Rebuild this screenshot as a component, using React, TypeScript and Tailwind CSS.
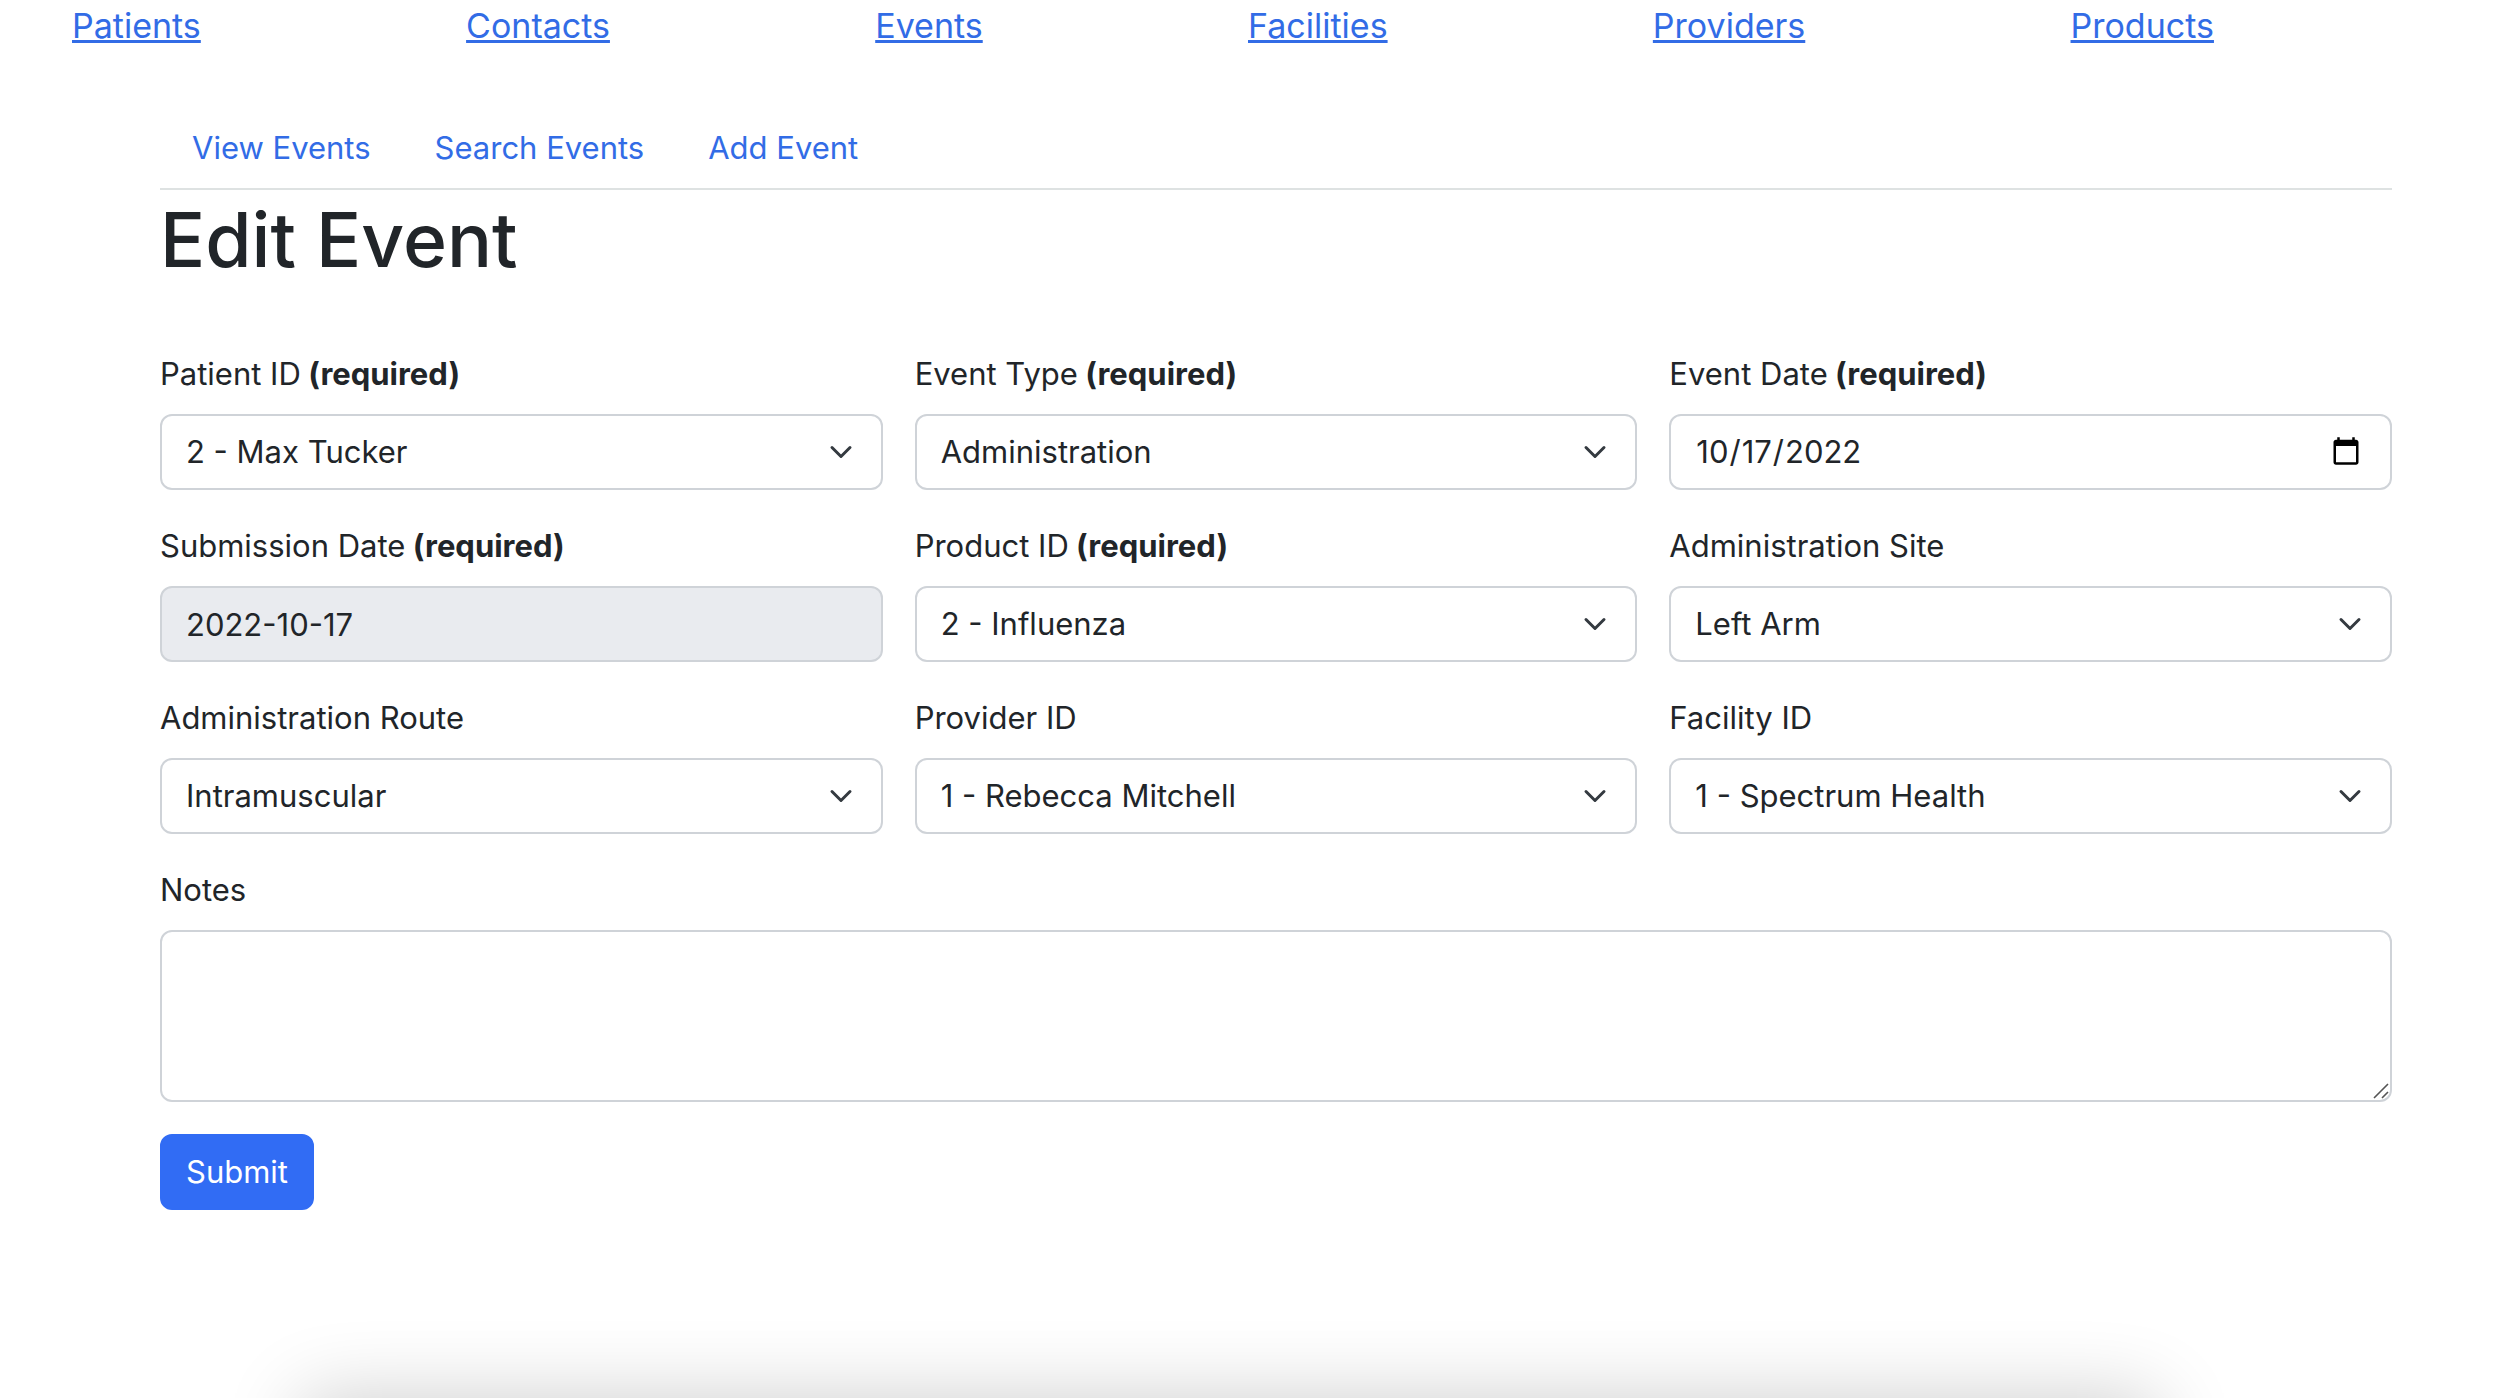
import { useState, type ReactNode } from "react";

const navLinks = ["Patients", "Contacts", "Events", "Facilities", "Providers", "Products"];
const tabs = ["View Events", "Search Events", "Add Event"];

const control =
  "block w-full rounded-xl border-2 border-[#cfd3d8] bg-white px-6 py-3 text-[31px] leading-12 text-[#212529]";

type FieldProps = { id: string; label: string; required?: boolean; children: ReactNode };

function Field({ id, label, required, children }: FieldProps) {
  return (
    <div>
      <label htmlFor={id} className="mb-4 block text-[31px] leading-12">
        {label}
        {required && <strong className="font-bold"> (required)</strong>}
      </label>
      {children}
    </div>
  );
}

type SelectFieldProps = { id: string; label: string; required?: boolean; option: string };

function SelectField({ id, label, required, option }: SelectFieldProps) {
  return (
    <Field id={id} label={label} required={required}>
      <div className="relative">
        <select id={id} className={`${control} h-19 appearance-none pr-18`}>
          <option>{option}</option>
        </select>
        <svg
          viewBox="0 0 16 16"
          className="pointer-events-none absolute top-1/2 right-[26px] h-6 w-8 -translate-y-1/2"
          fill="none"
          stroke="#343a40"
          strokeWidth="2"
          strokeLinecap="round"
          strokeLinejoin="round"
          aria-hidden="true"
        >
          <path d="m2 5 6 6 6-6" />
        </svg>
      </div>
    </Field>
  );
}

export default function App() {
  const [eventDate, setEventDate] = useState("2022-10-17");

  return (
    <div className="relative min-h-screen overflow-hidden bg-white font-['Inter','Liberation_Sans',sans-serif] text-[#212529]">
      <nav className="flex justify-between pr-[306px] pl-[72px]">
        {navLinks.map((link) => (
          <a
            key={link}
            href="#"
            className="text-[34px] leading-[52px] text-[#326ce6] underline decoration-3 underline-offset-2"
          >
            {link}
          </a>
        ))}
      </nav>

      <main className="mt-14 pr-32 pl-40">
        <nav className="flex border-b-2 border-[#dee2e2]">
          {tabs.map((tab) => (
            <a key={tab} href="#" className="px-8 py-4 text-[31px] leading-12 text-[#326ce6]">
              {tab}
            </a>
          ))}
        </nav>

        <h1 className="mb-15 text-[75px] leading-25 font-medium">Edit Event</h1>

        <form onSubmit={(e) => e.preventDefault()}>
          <div className="grid grid-cols-3 gap-8">
            <SelectField id="patient" label="Patient ID" required option="2 - Max Tucker" />
            <SelectField id="type" label="Event Type" required option="Administration" />
            <Field id="date" label="Event Date" required>
              <input
                id="date"
                type="date"
                value={eventDate}
                onChange={(e) => setEventDate(e.target.value)}
                className={`${control} h-19 pr-7 [&::-webkit-calendar-picker-indicator]:size-8 [&::-webkit-calendar-picker-indicator]:p-0`}
              />
            </Field>
            <Field id="submission" label="Submission Date" required>
              <input
                id="submission"
                type="text"
                readOnly
                value="2022-10-17"
                className="block h-19 w-full rounded-xl border-2 border-[#cfd3d8] bg-[#e9ebef] px-6 py-3 text-[31px] leading-12 text-[#212529]"
              />
            </Field>
            <SelectField id="product" label="Product ID" required option="2 - Influenza" />
            <SelectField id="site" label="Administration Site" option="Left Arm" />
            <SelectField id="route" label="Administration Route" option="Intramuscular" />
            <SelectField id="provider" label="Provider ID" option="1 - Rebecca Mitchell" />
            <SelectField id="facility" label="Facility ID" option="1 - Spectrum Health" />
            <div className="col-span-3">
              <Field id="notes" label="Notes">
                <div className="relative">
                  <textarea
                    id="notes"
                    className={`${control} h-43 resize-y [&::-webkit-resizer]:bg-transparent`}
                  />
                  <svg
                    viewBox="0 0 16 16"
                    className="pointer-events-none absolute right-[3px] bottom-[3px] size-4"
                    stroke="#555"
                    strokeWidth="1.6"
                    aria-hidden="true"
                  >
                    <path d="M1 15 15 1M9 15l6-6" />
                  </svg>
                </div>
              </Field>
            </div>
          </div>
          <button
            type="submit"
            className="mt-8 rounded-xl border-2 border-[#316cf4] bg-[#316cf4] px-6 py-3 text-[31px] leading-12 text-white"
          >
            Submit
          </button>
        </form>
      </main>

      <div
        className="pointer-events-none absolute top-full right-[14.4%] left-[12%] h-50 shadow-[0_0_80px_rgba(0,0,0,0.2)]"
        aria-hidden="true"
      />
    </div>
  );
}
